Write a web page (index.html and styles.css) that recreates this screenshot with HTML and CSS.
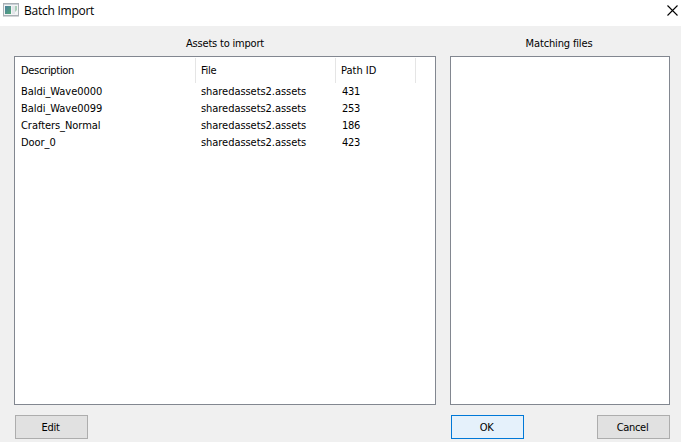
FILE: index.html
```html
<!DOCTYPE html>
<html lang="en">
<head>
<meta charset="utf-8">
<title>Batch Import</title>
<link rel="stylesheet" href="styles.css">
</head>
<body>
<div class="window">
  <header class="titlebar">
    <svg class="app-icon" width="16" height="14" viewBox="0 0 16 14">
      <defs><linearGradient id="pane" x1="0" y1="0" x2="1" y2="1"><stop offset="0" stop-color="#4b7f9c"/><stop offset="1" stop-color="#54a878"/></linearGradient></defs>
      <rect x=".5" y=".5" width="15" height="12" fill="#f3f4f5" stroke="#a9b0b5"/>
      <path d="M1 1.5h14" stroke="#c9d0d6"/>
      <rect x="2" y="3" width="6" height="8" fill="url(#pane)"/>
      <rect x="9" y="3" width="3" height="8" fill="#e2e5e9"/>
      <path d="M12 3h2v4l-2 2z" fill="#a8cfb8"/>
      <path d="M0 13.5h16" stroke="#d3d5d7"/>
    </svg>
    <h1 class="title">Batch Import</h1>
    <svg class="close" width="11" height="11" viewBox="0 0 11 11"><path d="M.5.5l10 10M10.5.5l-10 10" stroke="#000" stroke-width="1.1"/></svg>
  </header>
  <main class="content">
    <section class="assets">
      <h2 class="label label-assets">Assets to import</h2>
      <div class="panel">
        <div class="row head"><span>Description</span><span class="file-head">File</span><span class="path-head">Path ID</span></div>
        <div class="row"><span class="name">Baldi_Wave0000</span><span class="file">sharedassets2.assets</span><span>431</span></div>
        <div class="row"><span class="name">Baldi_Wave0099</span><span class="file">sharedassets2.assets</span><span>253</span></div>
        <div class="row"><span class="name">Crafters_Normal</span><span class="file">sharedassets2.assets</span><span>186</span></div>
        <div class="row"><span class="name">Door_0</span><span class="file">sharedassets2.assets</span><span>423</span></div>
      </div>
      <div class="actions"><button>Edit</button></div>
    </section>
    <section class="matches">
      <h2 class="label label-matches">Matching files</h2>
      <div class="panel"></div>
      <div class="actions"><button class="primary">OK</button><button>Cancel</button></div>
    </section>
  </main>
</div>
</body>
</html>
```

FILE: styles.css
```css
* { box-sizing: border-box; }
body { margin: 0; background: #f0f0f0; color: #000; font: 11px/17px "DejaVu Sans Condensed", "DejaVu Sans", sans-serif; font-stretch: condensed; letter-spacing: -0.3px; }
.window { width: 681px; height: 442px; overflow: hidden; }
.titlebar { display: flex; align-items: center; height: 26px; padding: 0 4px 6px 3px; background: #fff; }
.app-icon { margin-top: 0; }
.title { flex: 1; margin: 1px 0 0 5px; font: 12px/18px "Open Sans", "Noto Sans", sans-serif; letter-spacing: -0.25px; }
.close { margin-right: -1px; }
.content { display: grid; grid-template-columns: 422px 220px; column-gap: 14px; padding-left: 14px; }
.label { height: 30px; margin: 0; padding-top: 9px; font: inherit; text-align: center; }
.label-assets { letter-spacing: -0.2px; }
.label-matches { padding-right: 2px; letter-spacing: -0.15px; }
.panel { height: 349px; border: 1px solid #828790; background: #fff; }
.row { display: grid; grid-template-columns: 181px 140px 80px; height: 17px; white-space: nowrap; }
.row > span { padding-left: 6px; }
.name { letter-spacing: -0.05px; }
.row > .file { padding-left: 5px; letter-spacing: -0.05px; }
.row > .file-head { padding-left: 5px; }
.row > .path-head { padding-left: 5px; letter-spacing: 0; }
.head { height: 24px; margin: 1px 0; line-height: 25px; }
.head > span { border-right: 1px solid #e5e5e5; }
.actions { display: flex; justify-content: space-between; padding: 10px 0 0 1px; }
button { width: 73px; height: 24px; padding: 0 2px 0 0; border: 1px solid #adadad; background: #e1e1e1; color: #000; font: inherit; letter-spacing: inherit; }
.primary { border-color: #0078d7; background: #e5f1fb; }
```
